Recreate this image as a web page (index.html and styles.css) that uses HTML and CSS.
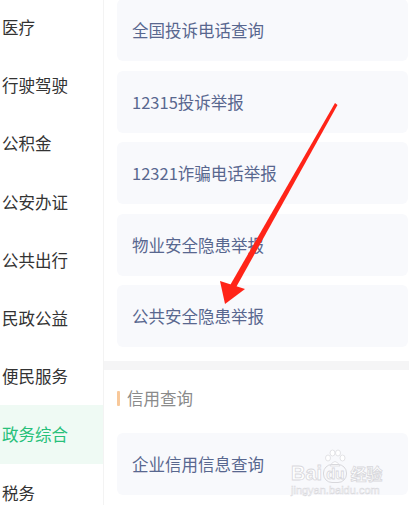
FILE: index.html
```html
<!DOCTYPE html>
<html lang="zh-CN">
<head>
<meta charset="utf-8">
<link rel="stylesheet" href="styles.css">
</head>
<body>
<div class="page">
  <nav class="sidebar">
    <div class="nav-item">医疗</div>
    <div class="nav-item">行驶驾驶</div>
    <div class="nav-item">公积金</div>
    <div class="nav-item">公安办证</div>
    <div class="nav-item">公共出行</div>
    <div class="nav-item">民政公益</div>
    <div class="nav-item">便民服务</div>
    <div class="nav-item active">政务综合</div>
    <div class="nav-item">税务</div>
  </nav>
  <main class="content">
    <div class="card-list">
      <div class="card">全国投诉电话查询</div>
      <div class="card">12315投诉举报</div>
      <div class="card">12321诈骗电话举报</div>
      <div class="card">物业安全隐患举报</div>
      <div class="card">公共安全隐患举报</div>
    </div>
    <div class="band"></div>
    <div class="section">
      <div class="section-title"><span class="bar"></span>信用查询</div>
      <div class="card">企业信用信息查询</div>
    </div>
  </main>
</div>
<svg class="arrow" width="409" height="505" viewBox="0 0 409 505">
  <polygon points="335,103 337.5,105 234,291 228.5,288" fill="#ff2418"/>
  <polygon points="220,281 245,289 225,304" fill="#ff2418"/>
</svg>
<div class="watermark">
  <svg class="wm-paw" width="26" height="18" viewBox="0 0 26 18">
    <g fill="#ffffff" stroke="#dcdce0" stroke-width="0.8">
      <ellipse cx="6" cy="9" rx="2.5" ry="3"/>
      <ellipse cx="10.5" cy="4" rx="2.5" ry="3"/>
      <ellipse cx="16" cy="4" rx="2.5" ry="3"/>
      <ellipse cx="20.5" cy="9" rx="2.5" ry="3"/>
      <path d="M8 17 Q13 8 18 17 Z"/>
    </g>
  </svg>
  <div class="wm-logo"><span class="wm-bai">Bai</span><span class="wm-du">du</span><span class="wm-jy">经验</span></div>
  <div class="wm-url">jingyan.baidu.com</div>
</div>
</body>
</html>
```

FILE: styles.css
```css
html, body {
  margin: 0;
  padding: 0;
  background: #ffffff;
  width: 409px;
  height: 505px;
  overflow: hidden;
  font-family: "Noto Sans CJK SC", "Noto Sans", sans-serif;
}

.page {
  display: flex;
  width: 409px;
  height: 505px;
}

.sidebar {
  width: 103px;
  flex: none;
  border-right: 1px solid #f3f3f3;
  display: flex;
  flex-direction: column;
  margin-top: -2px;
}

.nav-item {
  height: 58.2px;
  flex: none;
  display: flex;
  align-items: center;
  padding-left: 2px;
  font-size: 16.5px;
  color: #333333;
}

.nav-item.active {
  background: #effaf4;
  color: #27c07a;
}

.content {
  flex: 1;
  display: flex;
  flex-direction: column;
  margin-top: -1px;
}

.card-list {
  display: flex;
  flex-direction: column;
  gap: 9.5px;
  padding: 0 1px 0 13px;
}

.card {
  height: 62px;
  flex: none;
  background: #f8f9fc;
  border-radius: 6px;
  display: flex;
  align-items: center;
  padding-left: 15px;
  font-size: 16.5px;
  color: #58678f;
}

.band {
  height: 9px;
  margin-top: 14px;
  background: #f5f5f6;
}

.section {
  display: flex;
  flex-direction: column;
  padding: 0 1px 0 13px;
}

.section-title {
  height: 56px;
  display: flex;
  align-items: center;
  gap: 7px;
  font-size: 16.5px;
  color: #8a8a8a;
}

.bar {
  width: 3px;
  height: 15px;
  background: #f8c89a;
  border-radius: 1px;
}

.section .card {
  margin-top: 7px;
}

.arrow {
  position: absolute;
  left: 0;
  top: 0;
  pointer-events: none;
}

.watermark {
  position: absolute;
  left: 291px;
  top: 449px;
  width: 100px;
  color: #ffffff;
  font-family: "Liberation Sans", sans-serif;
  -webkit-text-stroke: 0.8px #d8d8dc;
  pointer-events: none;
}

.wm-paw {
  display: block;
  margin-left: 31px;
  margin-bottom: -4px;
}

.wm-logo {
  display: flex;
  align-items: flex-end;
  font-size: 20px;
  font-weight: bold;
  line-height: 20px;
}

.wm-du {
  font-size: 15px;
  line-height: 17px;
  border: 1px solid #d8d8dc;
  border-radius: 9px;
  padding: 0 2px;
  margin-left: 1px;
}

.wm-jy {
  font-family: "Noto Sans CJK SC", sans-serif;
  font-size: 16px;
  line-height: 20px;
  margin-left: 3px;
}

.wm-url {
  font-size: 11px;
  -webkit-text-stroke: 0.5px #d8d8dc;
  margin-top: 1px;
}
```
